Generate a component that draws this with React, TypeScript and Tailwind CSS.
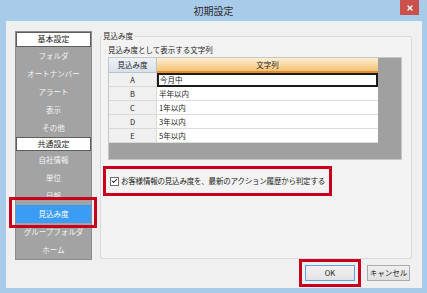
import { Check, X } from "lucide-react";

const navTop = ["フォルダ", "オートナンバー", "アラート", "表示", "その他"];
const navBottom = ["自社情報", "単位", "日報", "見込み度", "グループフォルダ", "ホーム"];
const rows = [
  ["A", "今月中"],
  ["B", "半年以内"],
  ["C", "1年以内"],
  ["D", "3年以内"],
  ["E", "5年以内"],
];

function NavHeader({ label }: { label: string }) {
  return (
    <div className="h-[15px] bg-white border border-[#5e5e5e] flex items-center justify-center text-[8px] text-[#1e1e1e]">
      {label}
    </div>
  );
}

function NavItem({ label, selected }: { label: string; selected?: boolean }) {
  if (selected) {
    return (
      <div className="relative h-[18px] bg-[#3a9cf5] flex items-center justify-center text-white">
        {label}
        <div className="absolute -left-[7px] -right-[6px] -top-[8px] -bottom-[5px] border-[3px] border-[#c8001e]" />
      </div>
    );
  }
  return <div className="h-[18px] flex items-center justify-center text-[#f4f4f4]">{label}</div>;
}

export default function App() {
  return (
    <div className="w-[427px] h-[293px] bg-[#a9cbea] flex flex-col font-['Noto_Sans_CJK_JP',sans-serif] text-[7.5px] leading-[10px] text-[#222]">
      <div className="relative h-[21px] flex items-center justify-center text-[10px] text-[#2d2d2d]">
        初期設定
        <div className="absolute right-[8px] top-0 w-[19px] h-[15px] bg-[#c9504b] flex items-center justify-center">
          <X className="w-[8px] h-[8px] text-white" strokeWidth={4} />
        </div>
      </div>

      <div className="flex-1 ml-[6px] mr-[5px] mb-[5px] bg-[#f0f0f0] border-t border-[#e6eef6] flex flex-col">
        <div className="flex items-start pt-[9px] pl-[9px] pr-[10px] gap-[8px]">
          <div className="w-[77px] h-[229px] bg-[#a3a3a3] border border-[#8c8c8c] flex flex-col">
            <NavHeader label="基本設定" />
            {navTop.map((n) => (
              <NavItem key={n} label={n} />
            ))}
            <NavHeader label="共通設定" />
            {navBottom.map((n) => (
              <NavItem key={n} label={n} selected={n === "見込み度"} />
            ))}
          </div>

          <fieldset className="w-[312px] h-[228px] border border-[#dadada] rounded-[2px] bg-[#f3f3f3]">
            <legend className="ml-[1px] px-[1px] text-[#1e1e1e]">見込み度</legend>
            <div className="ml-[7px] mt-[4px]">見込み度として表示する文字列</div>

            <div className="ml-[7px] mt-[2px] w-[294px] h-[103px] bg-[#a0a0a0] border border-[#c6c6c6]">
              <div className="flex h-[15px]">
                <div className="w-[48px] bg-gradient-to-b from-[#eef2f7] to-[#d9e1eb] border-r border-b border-[#b9c3cf] flex items-center justify-center">
                  見込み度
                </div>
                <div className="w-[221px] bg-gradient-to-b from-[#fdefd3] to-[#f6c274] border-b-2 border-[#e3902c] flex items-center justify-center">
                  文字列
                </div>
              </div>
              {rows.map(([k, v], i) => (
                <div key={k} className="flex h-[14px]">
                  <div className="w-[48px] bg-[#f0f0f0] border-b border-r border-[#d9d9d9] flex items-center justify-center">
                    {k}
                  </div>
                  <div
                    className={
                      i === 0
                        ? "w-[221px] bg-white border-2 border-[#1c1c1c] flex items-center pl-[1px]"
                        : "w-[221px] bg-white border-b border-[#dcdcdc] flex items-center pl-[2px]"
                    }
                  >
                    {v}
                  </div>
                </div>
              ))}
            </div>

            <div className="ml-[2px] mt-[6px] w-[229px] h-[30px] border-[3px] border-[#c8001e] flex items-center pl-[4px] gap-[2px]">
              <div className="w-[9px] h-[9px] shrink-0 bg-white border border-[#6f6f6f] flex items-center justify-center">
                <Check className="w-[8px] h-[8px] text-[#222]" strokeWidth={3.5} />
              </div>
              <span className="whitespace-nowrap tracking-[-0.2px]">
                お客様情報の見込み度を、最新のアクション履歴から判定する
              </span>
            </div>
          </fieldset>
        </div>

        <div className="flex justify-end gap-[12px] pr-[12px] mt-[5px]">
          <div className="relative">
            <div className="w-[50px] h-[16px] bg-gradient-to-b from-[#f2f2f2] to-[#e3e3e3] border border-[#5fa3e6] flex items-center justify-center">
              OK
            </div>
            <div className="absolute -inset-[6px] border-[3px] border-[#c8001e]" />
          </div>
          <div className="w-[43px] h-[16px] bg-gradient-to-b from-[#f0f0f0] to-[#e0e0e0] border border-[#acacac] flex items-center justify-center">
            キャンセル
          </div>
        </div>
      </div>
    </div>
  );
}
